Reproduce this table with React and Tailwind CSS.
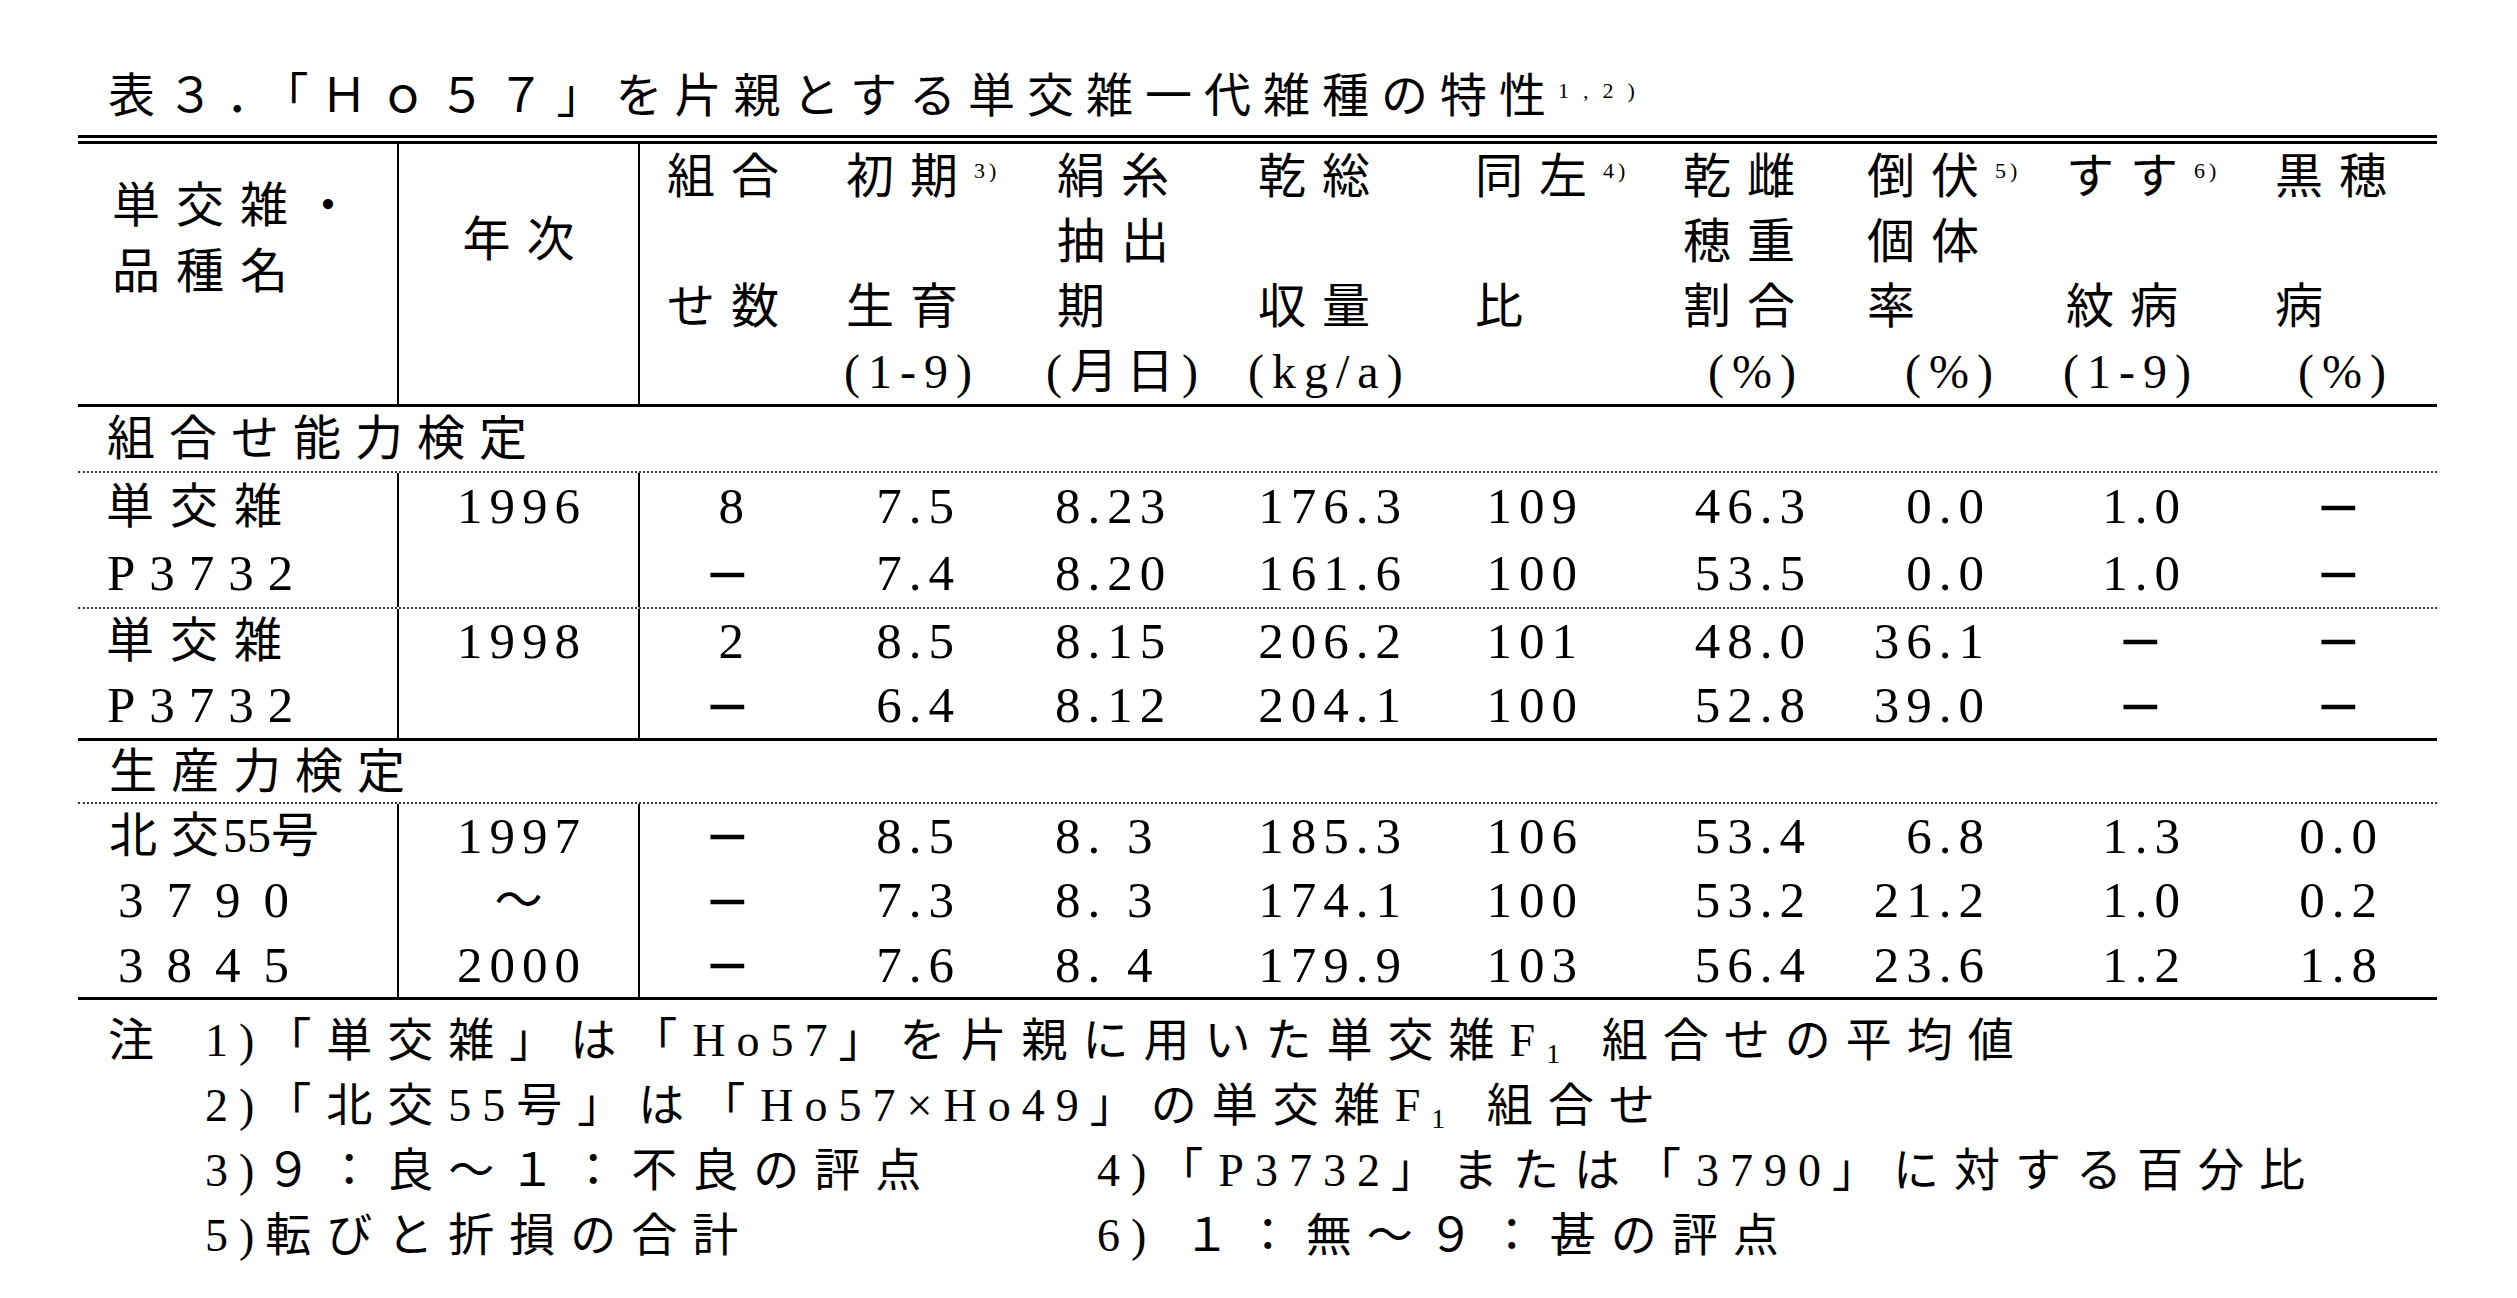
import React from 'react';

const font = "font-['Liberation_Serif','Noto_Sans_CJK_JP',serif]";
const grid = "grid grid-cols-[319px_241px_162px_210px_210px_220px_210px_190px_190px_210px_197px]";

// 見出し (列3〜11)
const head = [
  { pl: 'pl-[27px]', pp: 'pl-[27px]', rows: ['組合', '', 'せ数', ''] },
  { pl: 'pl-[46px]', pp: 'pl-[44px]', rows: ['初期', '', '生育', '(1-9)'], sup: '3)' },
  { pl: 'pl-[47px]', pp: 'pl-[36px]', rows: ['絹糸', '抽出', '期', '(月日)'] },
  { pl: 'pl-[38px]', pp: 'pl-[28px]', rows: ['乾総', '', '収量', '(kg/a)'] },
  { pl: 'pl-[35px]', pp: 'pl-[35px]', rows: ['同左', '', '比', ''], sup: '4)' },
  { pl: 'pl-[33px]', pp: 'pl-[58px]', rows: ['乾雌', '穂重', '割合', '(%)'] },
  { pl: 'pl-[27px]', pp: 'pl-[65px]', rows: ['倒伏', '個体', '率', '(%)'], sup: '5)' },
  { pl: 'pl-[36px]', pp: 'pl-[33px]', rows: ['すす', '', '紋病', '(1-9)'], sup: '6)' },
  { pl: 'pl-[35px]', pp: 'pl-[58px]', rows: ['黒穂', '', '病', '(%)'] },
];

// 数値列の配置
const valCols = [
  { cls: 'text-right pr-[56px]', dm: '-mr-[6px]' },
  { cls: 'text-right pr-[56px]', dm: '' },
  { cls: 'text-left pl-[45px]', dm: '' },
  { cls: 'text-right pr-[39px]', dm: '' },
  { cls: 'text-right pr-[73px]', dm: '' },
  { cls: 'text-right pr-[35px]', dm: '' },
  { cls: 'text-right pr-[46px]', dm: '' },
  { cls: 'text-right pr-[60px]', dm: 'mr-[17px]' },
  { cls: 'text-right pr-[60px]', dm: 'mr-[16px]' },
];

const Val = ({ v, dm }) =>
  v === '−' ? (
    <span className={`inline-block w-[46px] text-center font-['DejaVu_Sans'] text-[54px] tracking-normal ${dm}`}>−</span>
  ) : (
    <span className="inline-block tracking-[7px] -mr-[7px]">{v}</span>
  );

// 注の中の英数字
const L = ({ children }) => <span className="tracking-[11px]">{children}</span>;

const tankou = <span className="text-[48px] tracking-[16px]">単交雑</span>;
const p3732 = <span className="text-[51px] tracking-[14px]">P3732</span>;

const groups = [
  {
    rows: [
      { rh: 'h-[67px] leading-[67px]', pl: 'pl-[28px]', name: tankou, year: '1996', vals: ['8', '7.5', '8.23', '176.3', '109', '46.3', '0.0', '1.0', '−'] },
      { rh: 'h-[67px] leading-[67px]', pl: 'pl-[29px]', name: p3732, year: '', vals: ['−', '7.4', '8.20', '161.6', '100', '53.5', '0.0', '1.0', '−'] },
    ],
  },
  {
    rows: [
      { rh: 'h-[64px] leading-[64px]', pl: 'pl-[28px]', name: tankou, year: '1998', vals: ['2', '8.5', '8.15', '206.2', '101', '48.0', '36.1', '−', '−'] },
      { rh: 'h-[65px] leading-[65px]', pl: 'pl-[29px]', name: p3732, year: '', vals: ['−', '6.4', '8.12', '204.1', '100', '52.8', '39.0', '−', '−'] },
    ],
  },
  {
    rows: [
      {
        rh: 'h-[64px] leading-[64px]',
        pl: 'pl-[31px]',
        name: (
          <span className="text-[48px]">
            <span className="tracking-[14px]">北</span>
            <span className="tracking-[4px]">交</span>
            <span className="tracking-normal">55</span>号
          </span>
        ),
        year: '1997',
        vals: ['−', '8.5', '8. 3', '185.3', '106', '53.4', '6.8', '1.3', '0.0'],
      },
      { rh: 'h-[65px] leading-[65px]', pl: 'pl-[40px]', name: <span className="text-[51px] tracking-[23px]">3790</span>, year: '～', vals: ['−', '7.3', '8. 3', '174.1', '100', '53.2', '21.2', '1.0', '0.2'] },
      { rh: 'h-[64px] leading-[64px]', pl: 'pl-[40px]', name: <span className="text-[51px] tracking-[23px]">3845</span>, year: '2000', vals: ['−', '7.6', '8. 4', '179.9', '103', '56.4', '23.6', '1.2', '1.8'] },
    ],
  },
];

const Group = ({ rows }) => (
  <div className={grid}>
    {rows.map((r, i) => (
      <React.Fragment key={i}>
        <div className={`${r.rh} ${r.pl} whitespace-nowrap`}>{r.name}</div>
        <div className={`${r.rh} border-l-2 border-black text-center text-[51px]`}>
          {r.year === '～' ? <span className="text-[48px]">～</span> : <Val v={r.year} dm="" />}
        </div>
        {r.vals.map((v, j) => (
          <div
            key={j}
            className={`${r.rh} ${valCols[j].cls} text-[51px] whitespace-nowrap ${j === 0 ? 'border-l-2 border-black' : ''}`}
          >
            <Val v={v} dm={valCols[j].dm} />
          </div>
        ))}
      </React.Fragment>
    ))}
  </div>
);

const Dotted = () => <div className="border-t-2 border-dotted border-[#333]" />;
const Rule = () => <div className="h-[3px] bg-black" />;

export default function App() {
  return (
    <div className={`w-[2517px] h-[1298px] overflow-hidden bg-white text-black pl-[78px] ${font}`}>
      {/* 表題 */}
      <div className="pt-[66px] pl-[30px] h-[126px] text-[47px] leading-[60px] tracking-[12px] whitespace-nowrap">
        表３．「Ｈｏ５７」を片親とする単交雑一代雑種の特性
        <span className="relative -top-[14px] text-[22px] tracking-[14px]">1,2)</span>
      </div>

      <div className="w-[2359px] mt-[9px]">
        <Rule />
        <div className="h-[3px]" />
        <Rule />

        {/* 見出し */}
        <div className={`${grid} h-[260px]`}>
          <div className="pl-[34px] pt-[29px] text-[48px] leading-[66px] tracking-[16px] whitespace-nowrap">
            <div>単交雑・</div>
            <div>品種名</div>
          </div>
          <div className="border-l-2 border-black pt-[63px] pl-[16px] text-center text-[48px] leading-[65px] tracking-[16px]">
            年次
          </div>
          {head.map((h, k) => (
            <div key={k} className={k === 0 ? 'border-l-2 border-black text-[48px]' : 'text-[48px]'}>
              {h.rows.map((t, i) => (
                <div
                  key={i}
                  className={`h-[65px] leading-[65px] whitespace-nowrap ${i === 3 ? `${h.pp} tracking-[8px]` : `${h.pl} tracking-[16px]`}`}
                >
                  {t}
                  {i === 0 && h.sup && (
                    <span className="relative -top-[15px] text-[22px] tracking-[4px]">{h.sup}</span>
                  )}
                </div>
              ))}
            </div>
          ))}
        </div>
        <Rule />

        <div className="h-[64px] leading-[64px] pl-[29px] text-[48px] tracking-[14px]">組合せ能力検定</div>
        <Dotted />
        <Group rows={groups[0].rows} />
        <Dotted />
        <Group rows={groups[1].rows} />
        <Rule />

        <div className="h-[61px] leading-[61px] pl-[31px] text-[48px] tracking-[14px]">生産力検定</div>
        <Dotted />
        <Group rows={groups[2].rows} />
        <Rule />

        {/* 注 */}
        <div className="mt-[8px] pl-[30px] text-[46px] leading-[65px] tracking-[15px] whitespace-nowrap">
          <div className="flex">
            <span className="w-[97px]">注</span>
            <span>
              <L>1)</L>「単交雑」は「<L>Ho57</L>」を片親に用いた単交雑<L>F</L><sub className="text-[28px]">1</sub> 組合せの平均値
            </span>
          </div>
          <div className="pl-[97px]">
            <L>2)</L>「北交<L>55</L>号」は「<L>Ho57×Ho49</L>」の単交雑<L>F</L><sub className="text-[28px]">1</sub> 組合せ
          </div>
          <div className="flex pl-[97px]">
            <span className="w-[892px]"><L>3)</L>９：良～１：不良の評点</span>
            <span><L>4)</L>「<L>P3732</L>」または「<L>3790</L>」に対する百分比</span>
          </div>
          <div className="flex pl-[97px]">
            <span className="w-[892px]"><L>5)</L>転びと折損の合計</span>
            <span><L>6)</L> １：無～９：甚の評点</span>
          </div>
        </div>
      </div>
    </div>
  );
}
